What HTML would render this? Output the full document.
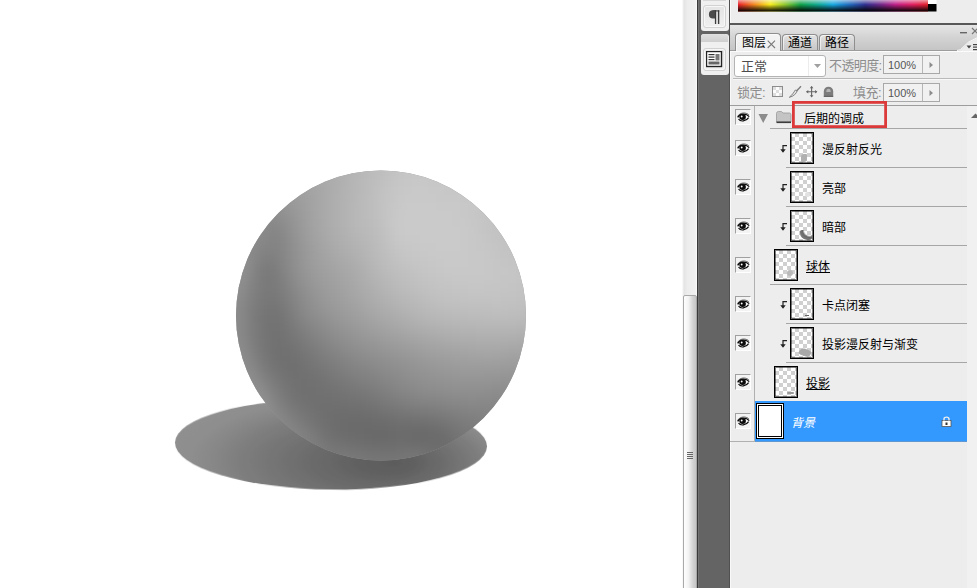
<!DOCTYPE html>
<html lang="zh-CN">
<head>
<meta charset="utf-8">
<title>图层</title>
<style>
html,body{margin:0;padding:0;}
body{width:977px;height:588px;overflow:hidden;background:#fff;position:relative;
  font-family:"Liberation Sans","Noto Sans CJK SC",sans-serif;font-size:12px;color:#000;}
.abs{position:absolute;}
#canvas{left:0;top:0;width:683px;height:588px;background:#fff;}
#vscroll{left:682px;top:0;width:15px;height:588px;background:linear-gradient(90deg,#fff 0,#e4e4e4 2px,#ececec 5px,#f0f0f0 13px,#fafafa 15px);}
#vthumb{left:1px;top:295px;width:12px;height:300px;border:1px solid #a9a9a9;border-radius:2px;
  background:linear-gradient(90deg,#fdfdfd 0%,#f4f4f4 35%,#d2d2d2 75%,#c6c6c6 100%);}
#dock{left:697px;top:0;width:33px;height:588px;background:#646464;box-shadow:inset 1px 0 0 #3a3a3a, inset 2px 0 0 #747474, inset -1px 0 0 #505050;}
.ipanel{left:4px;width:28px;background:#f0f0f0;border-radius:3px;}
.ibtn{left:2px;width:23px;height:23px;border:1px solid #d2d2d2;border-radius:3px;background:linear-gradient(#e4e4e4,#f0f0f0);box-sizing:border-box;box-shadow:inset 0 0 0 1px #f7f7f7;}
#panel{left:730px;top:0;width:247px;height:588px;background:#ededed;box-shadow:inset 1px 0 0 #f9f9f9;}
#tabbar{left:0;top:25px;width:247px;height:25px;background:linear-gradient(#e6e6e6,#d3d3d3 50%,#c5c5c5);border-bottom:1px solid #9c9c9c;}
.tab{top:9px;height:16px;box-sizing:border-box;border:1px solid #8e8e8e;border-bottom:none;border-radius:4px 4px 0 0;
  background:linear-gradient(#e2e2e2,#c6c6c6);line-height:17px;text-align:center;white-space:nowrap;box-shadow:inset 1px 1px 0 rgba(255,255,255,0.6);}
.tab.act{top:8px;background:linear-gradient(#f4f4f4,#ededed);height:18px;line-height:18px;z-index:2;}
.gray{color:#8c8c8c;}
.box{box-sizing:border-box;border:1px solid #a8a8a8;background:#f1f1f1;}
.hline{height:1px;background:#a6a6a6;}
.eye{left:5px;width:16px;height:16px;box-sizing:border-box;border:1px solid #a0a0a0;border-right-color:#fff;border-bottom-color:#fff;background:#f3f3f3;}
.thumb{width:24px;height:32px;box-shadow:inset 0 0 0 1px rgba(0,0,0,0.5);box-sizing:border-box;border:1px solid #000;
  background-color:#fff;
  background-image:linear-gradient(45deg,#d0d0d0 25%,transparent 25%,transparent 75%,#d0d0d0 75%),linear-gradient(45deg,#d0d0d0 25%,transparent 25%,transparent 75%,#d0d0d0 75%);
  background-size:8px 8px;background-position:0 0,4px 4px;}
.lname{white-space:nowrap;line-height:14px;height:14px;margin-top:2px;}
.u{text-decoration:underline;text-underline-offset:1px;text-decoration-thickness:1px;}
</style>
</head>
<body>
<div id="canvas" class="abs">
<svg class="abs" style="left:0;top:0" width="683" height="588" viewBox="0 0 683 588">
  <defs>
    <radialGradient id="shg" gradientUnits="userSpaceOnUse" cx="330" cy="462" r="220" fx="395" fy="462" gradientTransform="translate(0 462) scale(1 0.4) translate(0 -462)">
      <stop offset="0" stop-color="#5c5c5c"/>
      <stop offset="0.12" stop-color="#606060"/>
      <stop offset="0.23" stop-color="#676767"/>
      <stop offset="0.34" stop-color="#6e6e6e"/>
      <stop offset="0.45" stop-color="#767676"/>
      <stop offset="0.55" stop-color="#7e7e7e"/>
      <stop offset="0.63" stop-color="#868686"/>
      <stop offset="0.72" stop-color="#8e8e8e"/>
      <stop offset="1" stop-color="#919191"/>
    </radialGradient>
    <clipPath id="cc"><circle cx="381" cy="315.5" r="145"/></clipPath>
    <filter id="sb" x="-10%" y="-10%" width="120%" height="120%" color-interpolation-filters="sRGB"><feGaussianBlur stdDeviation="4"/></filter>
    <filter id="rb" x="-10%" y="-10%" width="120%" height="120%"><feGaussianBlur stdDeviation="3.5"/></filter>
    <filter id="b1" x="-20%" y="-20%" width="140%" height="140%"><feGaussianBlur stdDeviation="0.7"/></filter>
  </defs>
  <ellipse cx="331" cy="444.5" rx="156" ry="45" fill="url(#shg)" transform="rotate(0.7 331 444.5)" filter="url(#b1)"/>
  <circle cx="381" cy="315.5" r="145" fill="#999"/>
  <!--SPHERE--><g clip-path="url(#cc)"><g filter="url(#sb)"><path fill="#6a6a6a" d="M364 426.5h8.4v8.4h-8.4zM372 426.5h8.4v8.4h-8.4zM380 426.5h8.4v8.4h-8.4zM372 434.5h8.4v8.4h-8.4zM380 434.5h8.4v8.4h-8.4zM412 434.5h8.4v8.4h-8.4zM420 434.5h8.4v8.4h-8.4z"/><path fill="#6b6b6b" d="M348 418.5h8.4v8.4h-8.4zM356 418.5h8.4v8.4h-8.4zM364 418.5h8.4v8.4h-8.4zM348 426.5h8.4v8.4h-8.4zM356 426.5h8.4v8.4h-8.4zM388 426.5h8.4v8.4h-8.4zM412 426.5h8.4v8.4h-8.4zM420 426.5h8.4v8.4h-8.4zM364 434.5h8.4v8.4h-8.4zM388 434.5h8.4v8.4h-8.4zM404 434.5h8.4v8.4h-8.4zM428 434.5h8.4v8.4h-8.4zM436 434.5h8.4v8.4h-8.4z"/><path fill="#6c6c6c" d="M340 418.5h8.4v8.4h-8.4zM372 418.5h8.4v8.4h-8.4zM380 418.5h8.4v8.4h-8.4zM340 426.5h8.4v8.4h-8.4zM396 426.5h8.4v8.4h-8.4zM404 426.5h8.4v8.4h-8.4zM428 426.5h8.4v8.4h-8.4zM356 434.5h8.4v8.4h-8.4zM396 434.5h8.4v8.4h-8.4z"/><path fill="#6d6d6d" d="M332 410.5h8.4v8.4h-8.4zM340 410.5h8.4v8.4h-8.4zM348 410.5h8.4v8.4h-8.4zM356 410.5h8.4v8.4h-8.4zM332 418.5h8.4v8.4h-8.4zM332 426.5h8.4v8.4h-8.4zM348 434.5h8.4v8.4h-8.4zM428 442.5h8.4v8.4h-8.4zM436 442.5h8.4v8.4h-8.4zM444 442.5h8.4v8.4h-8.4zM444 450.5h8.4v8.4h-8.4zM444 458.5h8.4v8.4h-8.4z"/><path fill="#6e6e6e" d="M324 410.5h8.4v8.4h-8.4zM364 410.5h8.4v8.4h-8.4zM388 418.5h8.4v8.4h-8.4zM436 426.5h8.4v8.4h-8.4zM340 434.5h8.4v8.4h-8.4zM444 434.5h8.4v8.4h-8.4zM372 442.5h8.4v8.4h-8.4zM380 442.5h8.4v8.4h-8.4zM388 442.5h8.4v8.4h-8.4zM420 442.5h8.4v8.4h-8.4zM436 450.5h8.4v8.4h-8.4zM436 458.5h8.4v8.4h-8.4z"/><path fill="#6f6f6f" d="M316 402.5h8.4v8.4h-8.4zM324 402.5h8.4v8.4h-8.4zM332 402.5h8.4v8.4h-8.4zM340 402.5h8.4v8.4h-8.4zM372 410.5h8.4v8.4h-8.4zM324 418.5h8.4v8.4h-8.4zM396 418.5h8.4v8.4h-8.4zM404 418.5h8.4v8.4h-8.4zM364 442.5h8.4v8.4h-8.4zM396 442.5h8.4v8.4h-8.4zM404 442.5h8.4v8.4h-8.4zM412 442.5h8.4v8.4h-8.4zM452 450.5h8.4v8.4h-8.4z"/><path fill="#707070" d="M276 346.5h8.4v8.4h-8.4zM276 354.5h8.4v8.4h-8.4zM284 354.5h8.4v8.4h-8.4zM284 362.5h8.4v8.4h-8.4zM292 362.5h8.4v8.4h-8.4zM292 370.5h8.4v8.4h-8.4zM300 378.5h8.4v8.4h-8.4zM300 386.5h8.4v8.4h-8.4zM308 386.5h8.4v8.4h-8.4zM308 394.5h8.4v8.4h-8.4zM316 394.5h8.4v8.4h-8.4zM324 394.5h8.4v8.4h-8.4zM348 402.5h8.4v8.4h-8.4zM356 402.5h8.4v8.4h-8.4zM316 410.5h8.4v8.4h-8.4zM412 418.5h8.4v8.4h-8.4zM420 418.5h8.4v8.4h-8.4zM324 426.5h8.4v8.4h-8.4zM332 434.5h8.4v8.4h-8.4zM356 442.5h8.4v8.4h-8.4zM452 442.5h8.4v8.4h-8.4zM428 450.5h8.4v8.4h-8.4z"/><path fill="#717171" d="M276 338.5h8.4v8.4h-8.4zM284 346.5h8.4v8.4h-8.4zM292 354.5h8.4v8.4h-8.4zM284 370.5h8.4v8.4h-8.4zM300 370.5h8.4v8.4h-8.4zM292 378.5h8.4v8.4h-8.4zM308 378.5h8.4v8.4h-8.4zM292 386.5h8.4v8.4h-8.4zM316 386.5h8.4v8.4h-8.4zM300 394.5h8.4v8.4h-8.4zM332 394.5h8.4v8.4h-8.4zM308 402.5h8.4v8.4h-8.4zM380 410.5h8.4v8.4h-8.4zM316 418.5h8.4v8.4h-8.4zM444 426.5h8.4v8.4h-8.4zM348 442.5h8.4v8.4h-8.4zM428 458.5h8.4v8.4h-8.4z"/><path fill="#727272" d="M268 322.5h8.4v8.4h-8.4zM268 330.5h8.4v8.4h-8.4zM276 330.5h8.4v8.4h-8.4zM268 338.5h8.4v8.4h-8.4zM268 346.5h8.4v8.4h-8.4zM276 362.5h8.4v8.4h-8.4zM300 362.5h8.4v8.4h-8.4zM308 370.5h8.4v8.4h-8.4zM316 378.5h8.4v8.4h-8.4zM324 386.5h8.4v8.4h-8.4zM340 394.5h8.4v8.4h-8.4zM364 402.5h8.4v8.4h-8.4zM388 410.5h8.4v8.4h-8.4zM428 418.5h8.4v8.4h-8.4zM324 434.5h8.4v8.4h-8.4zM460 450.5h8.4v8.4h-8.4zM428 466.5h8.4v8.4h-8.4z"/><path fill="#737373" d="M268 314.5h8.4v8.4h-8.4zM276 322.5h8.4v8.4h-8.4zM284 338.5h8.4v8.4h-8.4zM292 346.5h8.4v8.4h-8.4zM268 354.5h8.4v8.4h-8.4zM284 378.5h8.4v8.4h-8.4zM332 386.5h8.4v8.4h-8.4zM292 394.5h8.4v8.4h-8.4zM348 394.5h8.4v8.4h-8.4zM300 402.5h8.4v8.4h-8.4zM372 402.5h8.4v8.4h-8.4zM308 410.5h8.4v8.4h-8.4zM436 418.5h8.4v8.4h-8.4zM452 434.5h8.4v8.4h-8.4zM340 442.5h8.4v8.4h-8.4zM380 450.5h8.4v8.4h-8.4zM388 450.5h8.4v8.4h-8.4zM420 450.5h8.4v8.4h-8.4z"/><path fill="#747474" d="M268 306.5h8.4v8.4h-8.4zM276 314.5h8.4v8.4h-8.4zM300 354.5h8.4v8.4h-8.4zM276 370.5h8.4v8.4h-8.4zM316 370.5h8.4v8.4h-8.4zM324 378.5h8.4v8.4h-8.4zM356 394.5h8.4v8.4h-8.4zM396 410.5h8.4v8.4h-8.4zM316 426.5h8.4v8.4h-8.4zM332 442.5h8.4v8.4h-8.4zM460 442.5h8.4v8.4h-8.4zM364 450.5h8.4v8.4h-8.4zM372 450.5h8.4v8.4h-8.4zM396 450.5h8.4v8.4h-8.4zM420 458.5h8.4v8.4h-8.4z"/><path fill="#757575" d="M260 314.5h8.4v8.4h-8.4zM260 322.5h8.4v8.4h-8.4zM260 330.5h8.4v8.4h-8.4zM284 330.5h8.4v8.4h-8.4zM268 362.5h8.4v8.4h-8.4zM308 362.5h8.4v8.4h-8.4zM284 386.5h8.4v8.4h-8.4zM340 386.5h8.4v8.4h-8.4zM404 410.5h8.4v8.4h-8.4zM308 418.5h8.4v8.4h-8.4zM452 426.5h8.4v8.4h-8.4zM404 450.5h8.4v8.4h-8.4zM412 450.5h8.4v8.4h-8.4zM420 466.5h8.4v8.4h-8.4z"/><path fill="#767676" d="M268 298.5h8.4v8.4h-8.4zM260 306.5h8.4v8.4h-8.4zM276 306.5h8.4v8.4h-8.4zM260 338.5h8.4v8.4h-8.4zM292 338.5h8.4v8.4h-8.4zM260 346.5h8.4v8.4h-8.4zM332 378.5h8.4v8.4h-8.4zM364 394.5h8.4v8.4h-8.4zM292 402.5h8.4v8.4h-8.4zM380 402.5h8.4v8.4h-8.4zM300 410.5h8.4v8.4h-8.4zM412 410.5h8.4v8.4h-8.4zM444 418.5h8.4v8.4h-8.4zM460 434.5h8.4v8.4h-8.4zM468 442.5h8.4v8.4h-8.4zM356 450.5h8.4v8.4h-8.4zM396 458.5h8.4v8.4h-8.4zM404 458.5h8.4v8.4h-8.4zM412 458.5h8.4v8.4h-8.4zM404 466.5h8.4v8.4h-8.4zM412 466.5h8.4v8.4h-8.4z"/><path fill="#777777" d="M284 322.5h8.4v8.4h-8.4zM300 346.5h8.4v8.4h-8.4zM308 354.5h8.4v8.4h-8.4zM316 362.5h8.4v8.4h-8.4zM324 370.5h8.4v8.4h-8.4zM276 378.5h8.4v8.4h-8.4zM348 386.5h8.4v8.4h-8.4zM284 394.5h8.4v8.4h-8.4zM420 410.5h8.4v8.4h-8.4zM316 434.5h8.4v8.4h-8.4zM324 442.5h8.4v8.4h-8.4zM348 450.5h8.4v8.4h-8.4zM372 458.5h8.4v8.4h-8.4zM380 458.5h8.4v8.4h-8.4zM388 458.5h8.4v8.4h-8.4zM372 466.5h8.4v8.4h-8.4zM380 466.5h8.4v8.4h-8.4zM388 466.5h8.4v8.4h-8.4zM396 466.5h8.4v8.4h-8.4zM372 474.5h8.4v8.4h-8.4zM380 474.5h8.4v8.4h-8.4zM388 474.5h8.4v8.4h-8.4zM396 474.5h8.4v8.4h-8.4z"/><path fill="#787878" d="M268 290.5h8.4v8.4h-8.4zM260 298.5h8.4v8.4h-8.4zM260 354.5h8.4v8.4h-8.4zM340 378.5h8.4v8.4h-8.4zM356 386.5h8.4v8.4h-8.4zM372 394.5h8.4v8.4h-8.4zM388 402.5h8.4v8.4h-8.4zM428 410.5h8.4v8.4h-8.4zM460 426.5h8.4v8.4h-8.4zM468 434.5h8.4v8.4h-8.4zM332 450.5h8.4v8.4h-8.4zM340 450.5h8.4v8.4h-8.4zM324 458.5h8.4v8.4h-8.4zM332 458.5h8.4v8.4h-8.4zM356 458.5h8.4v8.4h-8.4zM364 458.5h8.4v8.4h-8.4zM324 466.5h8.4v8.4h-8.4zM332 466.5h8.4v8.4h-8.4zM348 466.5h8.4v8.4h-8.4zM356 466.5h8.4v8.4h-8.4zM364 466.5h8.4v8.4h-8.4zM356 474.5h8.4v8.4h-8.4zM364 474.5h8.4v8.4h-8.4z"/><path fill="#797979" d="M260 290.5h8.4v8.4h-8.4zM276 298.5h8.4v8.4h-8.4zM252 314.5h8.4v8.4h-8.4zM284 314.5h8.4v8.4h-8.4zM292 330.5h8.4v8.4h-8.4zM268 370.5h8.4v8.4h-8.4zM300 418.5h8.4v8.4h-8.4zM452 418.5h8.4v8.4h-8.4zM308 426.5h8.4v8.4h-8.4zM476 442.5h8.4v8.4h-8.4zM324 450.5h8.4v8.4h-8.4zM316 458.5h8.4v8.4h-8.4zM340 458.5h8.4v8.4h-8.4zM348 458.5h8.4v8.4h-8.4zM340 466.5h8.4v8.4h-8.4z"/><path fill="#7a7a7a" d="M260 274.5h8.4v8.4h-8.4zM268 274.5h8.4v8.4h-8.4zM260 282.5h8.4v8.4h-8.4zM268 282.5h8.4v8.4h-8.4zM252 306.5h8.4v8.4h-8.4zM252 322.5h8.4v8.4h-8.4zM252 330.5h8.4v8.4h-8.4zM300 338.5h8.4v8.4h-8.4zM308 346.5h8.4v8.4h-8.4zM324 362.5h8.4v8.4h-8.4zM332 370.5h8.4v8.4h-8.4zM348 378.5h8.4v8.4h-8.4zM276 386.5h8.4v8.4h-8.4zM364 386.5h8.4v8.4h-8.4zM396 402.5h8.4v8.4h-8.4zM292 410.5h8.4v8.4h-8.4zM436 410.5h8.4v8.4h-8.4zM468 426.5h8.4v8.4h-8.4zM316 450.5h8.4v8.4h-8.4z"/><path fill="#7b7b7b" d="M260 266.5h8.4v8.4h-8.4zM268 266.5h8.4v8.4h-8.4zM276 290.5h8.4v8.4h-8.4zM284 306.5h8.4v8.4h-8.4zM252 338.5h8.4v8.4h-8.4zM316 354.5h8.4v8.4h-8.4zM260 362.5h8.4v8.4h-8.4zM380 394.5h8.4v8.4h-8.4zM284 402.5h8.4v8.4h-8.4zM460 418.5h8.4v8.4h-8.4zM476 434.5h8.4v8.4h-8.4zM316 442.5h8.4v8.4h-8.4zM308 458.5h8.4v8.4h-8.4z"/><path fill="#7c7c7c" d="M252 298.5h8.4v8.4h-8.4zM292 322.5h8.4v8.4h-8.4zM340 370.5h8.4v8.4h-8.4zM404 402.5h8.4v8.4h-8.4zM444 410.5h8.4v8.4h-8.4zM308 450.5h8.4v8.4h-8.4z"/><path fill="#7d7d7d" d="M268 258.5h8.4v8.4h-8.4zM276 282.5h8.4v8.4h-8.4zM252 290.5h8.4v8.4h-8.4zM300 330.5h8.4v8.4h-8.4zM252 346.5h8.4v8.4h-8.4zM332 362.5h8.4v8.4h-8.4zM268 378.5h8.4v8.4h-8.4zM356 378.5h8.4v8.4h-8.4zM372 386.5h8.4v8.4h-8.4zM276 394.5h8.4v8.4h-8.4zM388 394.5h8.4v8.4h-8.4zM468 418.5h8.4v8.4h-8.4zM476 426.5h8.4v8.4h-8.4zM308 434.5h8.4v8.4h-8.4zM484 434.5h8.4v8.4h-8.4z"/><path fill="#7e7e7e" d="M260 258.5h8.4v8.4h-8.4zM276 274.5h8.4v8.4h-8.4zM284 298.5h8.4v8.4h-8.4zM308 338.5h8.4v8.4h-8.4zM316 346.5h8.4v8.4h-8.4zM324 354.5h8.4v8.4h-8.4zM412 402.5h8.4v8.4h-8.4zM452 410.5h8.4v8.4h-8.4zM292 418.5h8.4v8.4h-8.4zM300 426.5h8.4v8.4h-8.4zM308 442.5h8.4v8.4h-8.4z"/><path fill="#7f7f7f" d="M252 282.5h8.4v8.4h-8.4zM292 314.5h8.4v8.4h-8.4zM252 354.5h8.4v8.4h-8.4zM260 370.5h8.4v8.4h-8.4zM348 370.5h8.4v8.4h-8.4zM364 378.5h8.4v8.4h-8.4zM380 386.5h8.4v8.4h-8.4zM420 402.5h8.4v8.4h-8.4zM284 410.5h8.4v8.4h-8.4zM476 418.5h8.4v8.4h-8.4zM484 426.5h8.4v8.4h-8.4zM300 450.5h8.4v8.4h-8.4z"/><path fill="#808080" d="M268 250.5h8.4v8.4h-8.4zM276 266.5h8.4v8.4h-8.4zM252 274.5h8.4v8.4h-8.4zM284 290.5h8.4v8.4h-8.4zM340 362.5h8.4v8.4h-8.4zM396 394.5h8.4v8.4h-8.4zM428 402.5h8.4v8.4h-8.4zM460 410.5h8.4v8.4h-8.4zM300 442.5h8.4v8.4h-8.4z"/><path fill="#818181" d="M260 250.5h8.4v8.4h-8.4zM252 266.5h8.4v8.4h-8.4zM244 306.5h8.4v8.4h-8.4zM244 314.5h8.4v8.4h-8.4zM244 322.5h8.4v8.4h-8.4zM300 322.5h8.4v8.4h-8.4zM244 330.5h8.4v8.4h-8.4zM332 354.5h8.4v8.4h-8.4zM356 370.5h8.4v8.4h-8.4zM372 378.5h8.4v8.4h-8.4zM268 386.5h8.4v8.4h-8.4zM276 402.5h8.4v8.4h-8.4zM436 402.5h8.4v8.4h-8.4zM468 410.5h8.4v8.4h-8.4zM484 418.5h8.4v8.4h-8.4zM492 426.5h8.4v8.4h-8.4zM300 434.5h8.4v8.4h-8.4zM292 450.5h8.4v8.4h-8.4z"/><path fill="#828282" d="M276 258.5h8.4v8.4h-8.4zM244 298.5h8.4v8.4h-8.4zM292 306.5h8.4v8.4h-8.4zM308 330.5h8.4v8.4h-8.4zM316 338.5h8.4v8.4h-8.4zM324 346.5h8.4v8.4h-8.4zM388 386.5h8.4v8.4h-8.4zM404 394.5h8.4v8.4h-8.4zM476 410.5h8.4v8.4h-8.4zM492 418.5h8.4v8.4h-8.4zM292 442.5h8.4v8.4h-8.4z"/><path fill="#838383" d="M268 242.5h8.4v8.4h-8.4zM284 282.5h8.4v8.4h-8.4zM244 338.5h8.4v8.4h-8.4zM252 362.5h8.4v8.4h-8.4zM348 362.5h8.4v8.4h-8.4zM364 370.5h8.4v8.4h-8.4zM444 402.5h8.4v8.4h-8.4zM484 410.5h8.4v8.4h-8.4zM292 426.5h8.4v8.4h-8.4zM292 434.5h8.4v8.4h-8.4zM284 442.5h8.4v8.4h-8.4z"/><path fill="#848484" d="M268 234.5h8.4v8.4h-8.4zM260 242.5h8.4v8.4h-8.4zM276 250.5h8.4v8.4h-8.4zM252 258.5h8.4v8.4h-8.4zM244 290.5h8.4v8.4h-8.4zM340 354.5h8.4v8.4h-8.4zM260 378.5h8.4v8.4h-8.4zM380 378.5h8.4v8.4h-8.4zM412 394.5h8.4v8.4h-8.4zM452 402.5h8.4v8.4h-8.4zM492 410.5h8.4v8.4h-8.4zM284 418.5h8.4v8.4h-8.4zM500 418.5h8.4v8.4h-8.4zM284 434.5h8.4v8.4h-8.4z"/><path fill="#858585" d="M268 226.5h8.4v8.4h-8.4zM276 242.5h8.4v8.4h-8.4zM284 274.5h8.4v8.4h-8.4zM292 298.5h8.4v8.4h-8.4zM244 346.5h8.4v8.4h-8.4zM332 346.5h8.4v8.4h-8.4zM356 362.5h8.4v8.4h-8.4zM372 370.5h8.4v8.4h-8.4zM396 386.5h8.4v8.4h-8.4zM268 394.5h8.4v8.4h-8.4zM460 402.5h8.4v8.4h-8.4zM284 426.5h8.4v8.4h-8.4zM276 434.5h8.4v8.4h-8.4z"/><path fill="#868686" d="M276 234.5h8.4v8.4h-8.4zM252 250.5h8.4v8.4h-8.4zM244 282.5h8.4v8.4h-8.4zM300 314.5h8.4v8.4h-8.4zM308 322.5h8.4v8.4h-8.4zM316 330.5h8.4v8.4h-8.4zM324 338.5h8.4v8.4h-8.4zM388 378.5h8.4v8.4h-8.4zM420 394.5h8.4v8.4h-8.4zM428 394.5h8.4v8.4h-8.4zM468 402.5h8.4v8.4h-8.4zM476 402.5h8.4v8.4h-8.4zM484 402.5h8.4v8.4h-8.4zM492 402.5h8.4v8.4h-8.4zM276 410.5h8.4v8.4h-8.4zM500 410.5h8.4v8.4h-8.4zM276 426.5h8.4v8.4h-8.4zM268 434.5h8.4v8.4h-8.4z"/><path fill="#878787" d="M260 234.5h8.4v8.4h-8.4zM292 290.5h8.4v8.4h-8.4zM348 354.5h8.4v8.4h-8.4zM364 362.5h8.4v8.4h-8.4zM252 370.5h8.4v8.4h-8.4zM404 386.5h8.4v8.4h-8.4zM436 394.5h8.4v8.4h-8.4zM500 402.5h8.4v8.4h-8.4zM508 410.5h8.4v8.4h-8.4zM276 418.5h8.4v8.4h-8.4zM268 426.5h8.4v8.4h-8.4z"/><path fill="#888888" d="M276 226.5h8.4v8.4h-8.4zM284 266.5h8.4v8.4h-8.4zM244 354.5h8.4v8.4h-8.4zM380 370.5h8.4v8.4h-8.4zM268 418.5h8.4v8.4h-8.4zM260 426.5h8.4v8.4h-8.4z"/><path fill="#898989" d="M252 210.5h8.4v8.4h-8.4zM260 218.5h8.4v8.4h-8.4zM268 218.5h8.4v8.4h-8.4zM252 242.5h8.4v8.4h-8.4zM284 258.5h8.4v8.4h-8.4zM244 274.5h8.4v8.4h-8.4zM236 306.5h8.4v8.4h-8.4zM300 306.5h8.4v8.4h-8.4zM236 314.5h8.4v8.4h-8.4zM236 322.5h8.4v8.4h-8.4zM236 330.5h8.4v8.4h-8.4zM340 346.5h8.4v8.4h-8.4zM396 378.5h8.4v8.4h-8.4zM412 386.5h8.4v8.4h-8.4zM444 394.5h8.4v8.4h-8.4zM492 394.5h8.4v8.4h-8.4zM508 402.5h8.4v8.4h-8.4z"/><path fill="#8a8a8a" d="M260 210.5h8.4v8.4h-8.4zM244 218.5h8.4v8.4h-8.4zM252 218.5h8.4v8.4h-8.4zM236 226.5h8.4v8.4h-8.4zM244 226.5h8.4v8.4h-8.4zM252 226.5h8.4v8.4h-8.4zM260 226.5h8.4v8.4h-8.4zM236 234.5h8.4v8.4h-8.4zM244 234.5h8.4v8.4h-8.4zM252 234.5h8.4v8.4h-8.4zM244 242.5h8.4v8.4h-8.4zM284 250.5h8.4v8.4h-8.4zM292 282.5h8.4v8.4h-8.4zM236 298.5h8.4v8.4h-8.4zM308 314.5h8.4v8.4h-8.4zM316 322.5h8.4v8.4h-8.4zM324 330.5h8.4v8.4h-8.4zM332 338.5h8.4v8.4h-8.4zM356 354.5h8.4v8.4h-8.4zM372 362.5h8.4v8.4h-8.4zM388 370.5h8.4v8.4h-8.4zM260 386.5h8.4v8.4h-8.4zM452 394.5h8.4v8.4h-8.4zM460 394.5h8.4v8.4h-8.4zM476 394.5h8.4v8.4h-8.4zM484 394.5h8.4v8.4h-8.4zM500 394.5h8.4v8.4h-8.4zM268 402.5h8.4v8.4h-8.4zM268 410.5h8.4v8.4h-8.4zM260 418.5h8.4v8.4h-8.4z"/><path fill="#8b8b8b" d="M276 218.5h8.4v8.4h-8.4zM228 242.5h8.4v8.4h-8.4zM236 242.5h8.4v8.4h-8.4zM284 242.5h8.4v8.4h-8.4zM244 250.5h8.4v8.4h-8.4zM244 266.5h8.4v8.4h-8.4zM300 298.5h8.4v8.4h-8.4zM220 322.5h8.4v8.4h-8.4zM228 322.5h8.4v8.4h-8.4zM220 330.5h8.4v8.4h-8.4zM228 330.5h8.4v8.4h-8.4zM220 338.5h8.4v8.4h-8.4zM228 338.5h8.4v8.4h-8.4zM236 338.5h8.4v8.4h-8.4zM244 362.5h8.4v8.4h-8.4zM404 378.5h8.4v8.4h-8.4zM420 386.5h8.4v8.4h-8.4zM468 394.5h8.4v8.4h-8.4zM252 418.5h8.4v8.4h-8.4z"/><path fill="#8c8c8c" d="M260 202.5h8.4v8.4h-8.4zM268 210.5h8.4v8.4h-8.4zM284 234.5h8.4v8.4h-8.4zM236 250.5h8.4v8.4h-8.4zM244 258.5h8.4v8.4h-8.4zM236 290.5h8.4v8.4h-8.4zM220 306.5h8.4v8.4h-8.4zM228 306.5h8.4v8.4h-8.4zM220 314.5h8.4v8.4h-8.4zM228 314.5h8.4v8.4h-8.4zM220 346.5h8.4v8.4h-8.4zM228 346.5h8.4v8.4h-8.4zM236 346.5h8.4v8.4h-8.4zM348 346.5h8.4v8.4h-8.4zM220 354.5h8.4v8.4h-8.4zM364 354.5h8.4v8.4h-8.4zM380 362.5h8.4v8.4h-8.4zM396 370.5h8.4v8.4h-8.4zM252 378.5h8.4v8.4h-8.4zM428 386.5h8.4v8.4h-8.4zM508 394.5h8.4v8.4h-8.4zM260 410.5h8.4v8.4h-8.4z"/><path fill="#8d8d8d" d="M228 250.5h8.4v8.4h-8.4zM292 274.5h8.4v8.4h-8.4zM220 290.5h8.4v8.4h-8.4zM228 290.5h8.4v8.4h-8.4zM300 290.5h8.4v8.4h-8.4zM220 298.5h8.4v8.4h-8.4zM228 298.5h8.4v8.4h-8.4zM340 338.5h8.4v8.4h-8.4zM228 354.5h8.4v8.4h-8.4zM236 354.5h8.4v8.4h-8.4zM228 362.5h8.4v8.4h-8.4zM236 362.5h8.4v8.4h-8.4zM228 370.5h8.4v8.4h-8.4zM236 370.5h8.4v8.4h-8.4zM412 378.5h8.4v8.4h-8.4zM436 386.5h8.4v8.4h-8.4zM492 386.5h8.4v8.4h-8.4zM500 386.5h8.4v8.4h-8.4zM516 394.5h8.4v8.4h-8.4zM252 410.5h8.4v8.4h-8.4z"/><path fill="#8e8e8e" d="M284 226.5h8.4v8.4h-8.4zM236 258.5h8.4v8.4h-8.4zM220 282.5h8.4v8.4h-8.4zM228 282.5h8.4v8.4h-8.4zM236 282.5h8.4v8.4h-8.4zM308 306.5h8.4v8.4h-8.4zM316 314.5h8.4v8.4h-8.4zM324 322.5h8.4v8.4h-8.4zM332 330.5h8.4v8.4h-8.4zM356 346.5h8.4v8.4h-8.4zM372 354.5h8.4v8.4h-8.4zM388 362.5h8.4v8.4h-8.4zM244 370.5h8.4v8.4h-8.4zM228 378.5h8.4v8.4h-8.4zM236 378.5h8.4v8.4h-8.4zM244 378.5h8.4v8.4h-8.4zM444 386.5h8.4v8.4h-8.4zM484 386.5h8.4v8.4h-8.4zM260 402.5h8.4v8.4h-8.4z"/><path fill="#8f8f8f" d="M268 202.5h8.4v8.4h-8.4zM276 210.5h8.4v8.4h-8.4zM228 258.5h8.4v8.4h-8.4zM220 266.5h8.4v8.4h-8.4zM228 266.5h8.4v8.4h-8.4zM236 266.5h8.4v8.4h-8.4zM292 266.5h8.4v8.4h-8.4zM220 274.5h8.4v8.4h-8.4zM228 274.5h8.4v8.4h-8.4zM236 274.5h8.4v8.4h-8.4zM404 370.5h8.4v8.4h-8.4zM420 378.5h8.4v8.4h-8.4zM236 386.5h8.4v8.4h-8.4zM244 386.5h8.4v8.4h-8.4zM252 386.5h8.4v8.4h-8.4zM452 386.5h8.4v8.4h-8.4zM460 386.5h8.4v8.4h-8.4zM468 386.5h8.4v8.4h-8.4zM476 386.5h8.4v8.4h-8.4zM508 386.5h8.4v8.4h-8.4zM236 394.5h8.4v8.4h-8.4zM260 394.5h8.4v8.4h-8.4zM252 402.5h8.4v8.4h-8.4z"/><path fill="#909090" d="M284 218.5h8.4v8.4h-8.4zM292 258.5h8.4v8.4h-8.4zM300 282.5h8.4v8.4h-8.4zM308 298.5h8.4v8.4h-8.4zM348 338.5h8.4v8.4h-8.4zM380 354.5h8.4v8.4h-8.4zM396 362.5h8.4v8.4h-8.4zM428 378.5h8.4v8.4h-8.4zM516 386.5h8.4v8.4h-8.4zM244 394.5h8.4v8.4h-8.4zM252 394.5h8.4v8.4h-8.4zM244 402.5h8.4v8.4h-8.4z"/><path fill="#919191" d="M292 250.5h8.4v8.4h-8.4zM340 330.5h8.4v8.4h-8.4zM364 346.5h8.4v8.4h-8.4zM412 370.5h8.4v8.4h-8.4zM436 378.5h8.4v8.4h-8.4zM500 378.5h8.4v8.4h-8.4z"/><path fill="#929292" d="M268 194.5h8.4v8.4h-8.4zM276 202.5h8.4v8.4h-8.4zM292 242.5h8.4v8.4h-8.4zM316 306.5h8.4v8.4h-8.4zM324 314.5h8.4v8.4h-8.4zM332 322.5h8.4v8.4h-8.4zM388 354.5h8.4v8.4h-8.4zM404 362.5h8.4v8.4h-8.4zM420 370.5h8.4v8.4h-8.4zM444 378.5h8.4v8.4h-8.4zM492 378.5h8.4v8.4h-8.4zM508 378.5h8.4v8.4h-8.4z"/><path fill="#939393" d="M284 210.5h8.4v8.4h-8.4zM292 234.5h8.4v8.4h-8.4zM300 274.5h8.4v8.4h-8.4zM308 290.5h8.4v8.4h-8.4zM356 338.5h8.4v8.4h-8.4zM372 346.5h8.4v8.4h-8.4zM452 378.5h8.4v8.4h-8.4zM460 378.5h8.4v8.4h-8.4zM468 378.5h8.4v8.4h-8.4zM476 378.5h8.4v8.4h-8.4zM484 378.5h8.4v8.4h-8.4zM516 378.5h8.4v8.4h-8.4z"/><path fill="#949494" d="M348 330.5h8.4v8.4h-8.4zM396 354.5h8.4v8.4h-8.4zM412 362.5h8.4v8.4h-8.4zM428 370.5h8.4v8.4h-8.4z"/><path fill="#959595" d="M276 194.5h8.4v8.4h-8.4zM292 226.5h8.4v8.4h-8.4zM300 266.5h8.4v8.4h-8.4zM308 282.5h8.4v8.4h-8.4zM316 298.5h8.4v8.4h-8.4zM340 322.5h8.4v8.4h-8.4zM364 338.5h8.4v8.4h-8.4zM380 346.5h8.4v8.4h-8.4zM436 370.5h8.4v8.4h-8.4zM508 370.5h8.4v8.4h-8.4zM524 378.5h8.4v8.4h-8.4z"/><path fill="#969696" d="M284 202.5h8.4v8.4h-8.4zM292 218.5h8.4v8.4h-8.4zM324 306.5h8.4v8.4h-8.4zM332 314.5h8.4v8.4h-8.4zM404 354.5h8.4v8.4h-8.4zM420 362.5h8.4v8.4h-8.4zM444 370.5h8.4v8.4h-8.4zM500 370.5h8.4v8.4h-8.4z"/><path fill="#979797" d="M300 250.5h8.4v8.4h-8.4zM300 258.5h8.4v8.4h-8.4zM316 290.5h8.4v8.4h-8.4zM356 330.5h8.4v8.4h-8.4zM372 338.5h8.4v8.4h-8.4zM388 346.5h8.4v8.4h-8.4zM428 362.5h8.4v8.4h-8.4zM452 370.5h8.4v8.4h-8.4zM484 370.5h8.4v8.4h-8.4zM492 370.5h8.4v8.4h-8.4zM516 370.5h8.4v8.4h-8.4z"/><path fill="#989898" d="M276 186.5h8.4v8.4h-8.4zM284 194.5h8.4v8.4h-8.4zM292 210.5h8.4v8.4h-8.4zM300 242.5h8.4v8.4h-8.4zM308 274.5h8.4v8.4h-8.4zM348 322.5h8.4v8.4h-8.4zM412 354.5h8.4v8.4h-8.4zM460 370.5h8.4v8.4h-8.4zM468 370.5h8.4v8.4h-8.4zM476 370.5h8.4v8.4h-8.4zM524 370.5h8.4v8.4h-8.4z"/><path fill="#999999" d="M324 298.5h8.4v8.4h-8.4zM332 306.5h8.4v8.4h-8.4zM340 314.5h8.4v8.4h-8.4zM396 346.5h8.4v8.4h-8.4zM436 362.5h8.4v8.4h-8.4z"/><path fill="#9a9a9a" d="M292 202.5h8.4v8.4h-8.4zM300 234.5h8.4v8.4h-8.4zM308 266.5h8.4v8.4h-8.4zM316 282.5h8.4v8.4h-8.4zM364 330.5h8.4v8.4h-8.4zM380 338.5h8.4v8.4h-8.4zM420 354.5h8.4v8.4h-8.4zM444 362.5h8.4v8.4h-8.4zM508 362.5h8.4v8.4h-8.4z"/><path fill="#9b9b9b" d="M284 186.5h8.4v8.4h-8.4zM300 226.5h8.4v8.4h-8.4zM324 290.5h8.4v8.4h-8.4zM356 322.5h8.4v8.4h-8.4zM404 346.5h8.4v8.4h-8.4zM452 362.5h8.4v8.4h-8.4zM500 362.5h8.4v8.4h-8.4zM516 362.5h8.4v8.4h-8.4z"/><path fill="#9c9c9c" d="M292 194.5h8.4v8.4h-8.4zM300 218.5h8.4v8.4h-8.4zM308 258.5h8.4v8.4h-8.4zM316 274.5h8.4v8.4h-8.4zM332 298.5h8.4v8.4h-8.4zM340 306.5h8.4v8.4h-8.4zM348 314.5h8.4v8.4h-8.4zM372 330.5h8.4v8.4h-8.4zM388 338.5h8.4v8.4h-8.4zM428 354.5h8.4v8.4h-8.4zM460 362.5h8.4v8.4h-8.4zM468 362.5h8.4v8.4h-8.4zM476 362.5h8.4v8.4h-8.4zM484 362.5h8.4v8.4h-8.4zM492 362.5h8.4v8.4h-8.4zM524 362.5h8.4v8.4h-8.4z"/><path fill="#9d9d9d" d="M284 178.5h8.4v8.4h-8.4zM300 210.5h8.4v8.4h-8.4zM308 250.5h8.4v8.4h-8.4zM324 282.5h8.4v8.4h-8.4zM412 346.5h8.4v8.4h-8.4zM436 354.5h8.4v8.4h-8.4z"/><path fill="#9e9e9e" d="M292 186.5h8.4v8.4h-8.4zM300 202.5h8.4v8.4h-8.4zM308 242.5h8.4v8.4h-8.4zM316 266.5h8.4v8.4h-8.4zM332 290.5h8.4v8.4h-8.4zM364 322.5h8.4v8.4h-8.4zM396 338.5h8.4v8.4h-8.4zM444 354.5h8.4v8.4h-8.4zM532 362.5h8.4v8.4h-8.4z"/><path fill="#9f9f9f" d="M300 194.5h8.4v8.4h-8.4zM324 274.5h8.4v8.4h-8.4zM340 298.5h8.4v8.4h-8.4zM348 306.5h8.4v8.4h-8.4zM356 314.5h8.4v8.4h-8.4zM380 330.5h8.4v8.4h-8.4zM420 346.5h8.4v8.4h-8.4zM508 354.5h8.4v8.4h-8.4zM516 354.5h8.4v8.4h-8.4z"/><path fill="#a0a0a0" d="M292 178.5h8.4v8.4h-8.4zM308 234.5h8.4v8.4h-8.4zM316 258.5h8.4v8.4h-8.4zM332 282.5h8.4v8.4h-8.4zM404 338.5h8.4v8.4h-8.4zM452 354.5h8.4v8.4h-8.4zM460 354.5h8.4v8.4h-8.4z"/><path fill="#a1a1a1" d="M292 170.5h8.4v8.4h-8.4zM300 186.5h8.4v8.4h-8.4zM308 226.5h8.4v8.4h-8.4zM316 250.5h8.4v8.4h-8.4zM324 266.5h8.4v8.4h-8.4zM340 290.5h8.4v8.4h-8.4zM372 322.5h8.4v8.4h-8.4zM388 330.5h8.4v8.4h-8.4zM428 346.5h8.4v8.4h-8.4zM468 354.5h8.4v8.4h-8.4zM476 354.5h8.4v8.4h-8.4zM492 354.5h8.4v8.4h-8.4zM500 354.5h8.4v8.4h-8.4zM524 354.5h8.4v8.4h-8.4z"/><path fill="#a2a2a2" d="M308 210.5h8.4v8.4h-8.4zM308 218.5h8.4v8.4h-8.4zM332 274.5h8.4v8.4h-8.4zM348 298.5h8.4v8.4h-8.4zM356 306.5h8.4v8.4h-8.4zM364 314.5h8.4v8.4h-8.4zM412 338.5h8.4v8.4h-8.4zM436 346.5h8.4v8.4h-8.4zM484 354.5h8.4v8.4h-8.4zM532 354.5h8.4v8.4h-8.4z"/><path fill="#a3a3a3" d="M300 178.5h8.4v8.4h-8.4zM308 194.5h8.4v8.4h-8.4zM308 202.5h8.4v8.4h-8.4zM316 242.5h8.4v8.4h-8.4zM324 258.5h8.4v8.4h-8.4zM340 282.5h8.4v8.4h-8.4zM380 322.5h8.4v8.4h-8.4zM396 330.5h8.4v8.4h-8.4zM444 346.5h8.4v8.4h-8.4z"/><path fill="#a4a4a4" d="M300 170.5h8.4v8.4h-8.4zM308 186.5h8.4v8.4h-8.4zM316 234.5h8.4v8.4h-8.4zM332 266.5h8.4v8.4h-8.4zM420 338.5h8.4v8.4h-8.4zM452 346.5h8.4v8.4h-8.4z"/><path fill="#a5a5a5" d="M308 178.5h8.4v8.4h-8.4zM324 250.5h8.4v8.4h-8.4zM340 274.5h8.4v8.4h-8.4zM348 290.5h8.4v8.4h-8.4zM356 298.5h8.4v8.4h-8.4zM372 314.5h8.4v8.4h-8.4zM460 346.5h8.4v8.4h-8.4zM508 346.5h8.4v8.4h-8.4zM516 346.5h8.4v8.4h-8.4z"/><path fill="#a6a6a6" d="M316 218.5h8.4v8.4h-8.4zM316 226.5h8.4v8.4h-8.4zM348 282.5h8.4v8.4h-8.4zM364 306.5h8.4v8.4h-8.4zM388 322.5h8.4v8.4h-8.4zM404 330.5h8.4v8.4h-8.4zM428 338.5h8.4v8.4h-8.4zM468 346.5h8.4v8.4h-8.4zM500 346.5h8.4v8.4h-8.4zM524 346.5h8.4v8.4h-8.4z"/><path fill="#a7a7a7" d="M308 170.5h8.4v8.4h-8.4zM316 186.5h8.4v8.4h-8.4zM316 194.5h8.4v8.4h-8.4zM316 202.5h8.4v8.4h-8.4zM316 210.5h8.4v8.4h-8.4zM324 242.5h8.4v8.4h-8.4zM332 258.5h8.4v8.4h-8.4zM340 266.5h8.4v8.4h-8.4zM436 338.5h8.4v8.4h-8.4zM476 346.5h8.4v8.4h-8.4zM484 346.5h8.4v8.4h-8.4zM492 346.5h8.4v8.4h-8.4zM532 346.5h8.4v8.4h-8.4z"/><path fill="#a8a8a8" d="M308 162.5h8.4v8.4h-8.4zM316 178.5h8.4v8.4h-8.4zM348 274.5h8.4v8.4h-8.4zM356 290.5h8.4v8.4h-8.4zM380 314.5h8.4v8.4h-8.4zM396 322.5h8.4v8.4h-8.4zM412 330.5h8.4v8.4h-8.4z"/><path fill="#a9a9a9" d="M316 170.5h8.4v8.4h-8.4zM324 234.5h8.4v8.4h-8.4zM332 250.5h8.4v8.4h-8.4zM340 258.5h8.4v8.4h-8.4zM364 298.5h8.4v8.4h-8.4zM372 306.5h8.4v8.4h-8.4zM444 338.5h8.4v8.4h-8.4z"/><path fill="#aaaaaa" d="M324 226.5h8.4v8.4h-8.4zM348 266.5h8.4v8.4h-8.4zM356 282.5h8.4v8.4h-8.4zM388 314.5h8.4v8.4h-8.4zM420 330.5h8.4v8.4h-8.4zM452 338.5h8.4v8.4h-8.4zM516 338.5h8.4v8.4h-8.4z"/><path fill="#ababab" d="M316 162.5h8.4v8.4h-8.4zM324 178.5h8.4v8.4h-8.4zM324 186.5h8.4v8.4h-8.4zM324 194.5h8.4v8.4h-8.4zM324 202.5h8.4v8.4h-8.4zM324 210.5h8.4v8.4h-8.4zM324 218.5h8.4v8.4h-8.4zM332 242.5h8.4v8.4h-8.4zM364 290.5h8.4v8.4h-8.4zM404 322.5h8.4v8.4h-8.4zM428 330.5h8.4v8.4h-8.4zM460 338.5h8.4v8.4h-8.4zM468 338.5h8.4v8.4h-8.4zM508 338.5h8.4v8.4h-8.4zM524 338.5h8.4v8.4h-8.4z"/><path fill="#acacac" d="M324 170.5h8.4v8.4h-8.4zM340 250.5h8.4v8.4h-8.4zM348 258.5h8.4v8.4h-8.4zM356 274.5h8.4v8.4h-8.4zM372 298.5h8.4v8.4h-8.4zM380 306.5h8.4v8.4h-8.4zM476 338.5h8.4v8.4h-8.4zM484 338.5h8.4v8.4h-8.4zM492 338.5h8.4v8.4h-8.4zM500 338.5h8.4v8.4h-8.4zM532 338.5h8.4v8.4h-8.4z"/><path fill="#adadad" d="M324 162.5h8.4v8.4h-8.4zM332 234.5h8.4v8.4h-8.4zM356 266.5h8.4v8.4h-8.4zM364 282.5h8.4v8.4h-8.4zM396 314.5h8.4v8.4h-8.4zM412 322.5h8.4v8.4h-8.4zM436 330.5h8.4v8.4h-8.4z"/><path fill="#aeaeae" d="M332 178.5h8.4v8.4h-8.4zM332 186.5h8.4v8.4h-8.4zM332 226.5h8.4v8.4h-8.4zM340 242.5h8.4v8.4h-8.4zM388 306.5h8.4v8.4h-8.4zM444 330.5h8.4v8.4h-8.4z"/><path fill="#afafaf" d="M332 170.5h8.4v8.4h-8.4zM332 194.5h8.4v8.4h-8.4zM332 202.5h8.4v8.4h-8.4zM332 210.5h8.4v8.4h-8.4zM332 218.5h8.4v8.4h-8.4zM348 250.5h8.4v8.4h-8.4zM372 290.5h8.4v8.4h-8.4zM380 298.5h8.4v8.4h-8.4zM404 314.5h8.4v8.4h-8.4zM420 322.5h8.4v8.4h-8.4zM452 330.5h8.4v8.4h-8.4z"/><path fill="#b0b0b0" d="M332 154.5h8.4v8.4h-8.4zM332 162.5h8.4v8.4h-8.4zM340 234.5h8.4v8.4h-8.4zM356 258.5h8.4v8.4h-8.4zM364 274.5h8.4v8.4h-8.4zM460 330.5h8.4v8.4h-8.4zM468 330.5h8.4v8.4h-8.4zM516 330.5h8.4v8.4h-8.4zM524 330.5h8.4v8.4h-8.4z"/><path fill="#b1b1b1" d="M340 170.5h8.4v8.4h-8.4zM340 178.5h8.4v8.4h-8.4zM340 226.5h8.4v8.4h-8.4zM348 242.5h8.4v8.4h-8.4zM372 282.5h8.4v8.4h-8.4zM396 306.5h8.4v8.4h-8.4zM428 322.5h8.4v8.4h-8.4zM476 330.5h8.4v8.4h-8.4zM484 330.5h8.4v8.4h-8.4zM492 330.5h8.4v8.4h-8.4zM500 330.5h8.4v8.4h-8.4zM508 330.5h8.4v8.4h-8.4zM532 330.5h8.4v8.4h-8.4zM540 330.5h8.4v8.4h-8.4z"/><path fill="#b2b2b2" d="M340 162.5h8.4v8.4h-8.4zM340 186.5h8.4v8.4h-8.4zM340 194.5h8.4v8.4h-8.4zM340 202.5h8.4v8.4h-8.4zM340 210.5h8.4v8.4h-8.4zM340 218.5h8.4v8.4h-8.4zM356 250.5h8.4v8.4h-8.4zM364 266.5h8.4v8.4h-8.4zM380 290.5h8.4v8.4h-8.4zM388 298.5h8.4v8.4h-8.4zM412 314.5h8.4v8.4h-8.4zM436 322.5h8.4v8.4h-8.4z"/><path fill="#b3b3b3" d="M340 154.5h8.4v8.4h-8.4zM348 234.5h8.4v8.4h-8.4zM444 322.5h8.4v8.4h-8.4z"/><path fill="#b4b4b4" d="M348 170.5h8.4v8.4h-8.4zM356 242.5h8.4v8.4h-8.4zM364 258.5h8.4v8.4h-8.4zM372 274.5h8.4v8.4h-8.4zM404 306.5h8.4v8.4h-8.4zM420 314.5h8.4v8.4h-8.4zM452 322.5h8.4v8.4h-8.4z"/><path fill="#b5b5b5" d="M348 154.5h8.4v8.4h-8.4zM348 162.5h8.4v8.4h-8.4zM348 178.5h8.4v8.4h-8.4zM348 186.5h8.4v8.4h-8.4zM348 194.5h8.4v8.4h-8.4zM348 226.5h8.4v8.4h-8.4zM380 282.5h8.4v8.4h-8.4zM388 290.5h8.4v8.4h-8.4zM396 298.5h8.4v8.4h-8.4zM460 322.5h8.4v8.4h-8.4zM468 322.5h8.4v8.4h-8.4zM516 322.5h8.4v8.4h-8.4zM524 322.5h8.4v8.4h-8.4zM532 322.5h8.4v8.4h-8.4z"/><path fill="#b6b6b6" d="M348 202.5h8.4v8.4h-8.4zM348 210.5h8.4v8.4h-8.4zM348 218.5h8.4v8.4h-8.4zM356 234.5h8.4v8.4h-8.4zM364 250.5h8.4v8.4h-8.4zM372 266.5h8.4v8.4h-8.4zM412 306.5h8.4v8.4h-8.4zM428 314.5h8.4v8.4h-8.4zM476 322.5h8.4v8.4h-8.4zM484 322.5h8.4v8.4h-8.4zM492 322.5h8.4v8.4h-8.4zM500 322.5h8.4v8.4h-8.4zM508 322.5h8.4v8.4h-8.4zM540 322.5h8.4v8.4h-8.4z"/><path fill="#b7b7b7" d="M356 162.5h8.4v8.4h-8.4zM356 170.5h8.4v8.4h-8.4zM364 242.5h8.4v8.4h-8.4zM380 274.5h8.4v8.4h-8.4zM404 298.5h8.4v8.4h-8.4zM436 314.5h8.4v8.4h-8.4z"/><path fill="#b8b8b8" d="M356 154.5h8.4v8.4h-8.4zM356 178.5h8.4v8.4h-8.4zM356 186.5h8.4v8.4h-8.4zM356 226.5h8.4v8.4h-8.4zM372 258.5h8.4v8.4h-8.4zM388 282.5h8.4v8.4h-8.4zM396 290.5h8.4v8.4h-8.4zM420 306.5h8.4v8.4h-8.4zM444 314.5h8.4v8.4h-8.4z"/><path fill="#b9b9b9" d="M356 194.5h8.4v8.4h-8.4zM356 202.5h8.4v8.4h-8.4zM356 210.5h8.4v8.4h-8.4zM356 218.5h8.4v8.4h-8.4zM364 234.5h8.4v8.4h-8.4zM412 298.5h8.4v8.4h-8.4zM452 314.5h8.4v8.4h-8.4zM460 314.5h8.4v8.4h-8.4zM524 314.5h8.4v8.4h-8.4z"/><path fill="#bababa" d="M364 154.5h8.4v8.4h-8.4zM364 162.5h8.4v8.4h-8.4zM364 170.5h8.4v8.4h-8.4zM364 226.5h8.4v8.4h-8.4zM372 250.5h8.4v8.4h-8.4zM380 266.5h8.4v8.4h-8.4zM388 274.5h8.4v8.4h-8.4zM404 290.5h8.4v8.4h-8.4zM428 306.5h8.4v8.4h-8.4zM468 314.5h8.4v8.4h-8.4zM476 314.5h8.4v8.4h-8.4zM516 314.5h8.4v8.4h-8.4zM532 314.5h8.4v8.4h-8.4zM540 314.5h8.4v8.4h-8.4z"/><path fill="#bbbbbb" d="M364 178.5h8.4v8.4h-8.4zM364 186.5h8.4v8.4h-8.4zM364 218.5h8.4v8.4h-8.4zM372 242.5h8.4v8.4h-8.4zM396 282.5h8.4v8.4h-8.4zM420 298.5h8.4v8.4h-8.4zM436 306.5h8.4v8.4h-8.4zM484 314.5h8.4v8.4h-8.4zM492 314.5h8.4v8.4h-8.4zM500 314.5h8.4v8.4h-8.4zM508 314.5h8.4v8.4h-8.4z"/><path fill="#bcbcbc" d="M372 154.5h8.4v8.4h-8.4zM372 162.5h8.4v8.4h-8.4zM364 194.5h8.4v8.4h-8.4zM364 202.5h8.4v8.4h-8.4zM364 210.5h8.4v8.4h-8.4zM372 234.5h8.4v8.4h-8.4zM380 258.5h8.4v8.4h-8.4zM412 290.5h8.4v8.4h-8.4zM444 306.5h8.4v8.4h-8.4z"/><path fill="#bdbdbd" d="M372 170.5h8.4v8.4h-8.4zM372 226.5h8.4v8.4h-8.4zM380 250.5h8.4v8.4h-8.4zM388 266.5h8.4v8.4h-8.4zM396 274.5h8.4v8.4h-8.4zM404 282.5h8.4v8.4h-8.4zM428 298.5h8.4v8.4h-8.4zM452 306.5h8.4v8.4h-8.4zM460 306.5h8.4v8.4h-8.4zM524 306.5h8.4v8.4h-8.4zM532 306.5h8.4v8.4h-8.4zM540 306.5h8.4v8.4h-8.4z"/><path fill="#bebebe" d="M372 178.5h8.4v8.4h-8.4zM372 218.5h8.4v8.4h-8.4zM420 290.5h8.4v8.4h-8.4zM468 306.5h8.4v8.4h-8.4zM476 306.5h8.4v8.4h-8.4zM484 306.5h8.4v8.4h-8.4zM508 306.5h8.4v8.4h-8.4zM516 306.5h8.4v8.4h-8.4z"/><path fill="#bfbfbf" d="M380 154.5h8.4v8.4h-8.4zM380 162.5h8.4v8.4h-8.4zM380 170.5h8.4v8.4h-8.4zM372 186.5h8.4v8.4h-8.4zM372 194.5h8.4v8.4h-8.4zM372 202.5h8.4v8.4h-8.4zM372 210.5h8.4v8.4h-8.4zM380 242.5h8.4v8.4h-8.4zM388 258.5h8.4v8.4h-8.4zM396 266.5h8.4v8.4h-8.4zM404 274.5h8.4v8.4h-8.4zM412 282.5h8.4v8.4h-8.4zM436 298.5h8.4v8.4h-8.4zM524 298.5h8.4v8.4h-8.4zM532 298.5h8.4v8.4h-8.4zM540 298.5h8.4v8.4h-8.4zM492 306.5h8.4v8.4h-8.4zM500 306.5h8.4v8.4h-8.4z"/><path fill="#c0c0c0" d="M380 234.5h8.4v8.4h-8.4zM428 290.5h8.4v8.4h-8.4zM444 298.5h8.4v8.4h-8.4zM452 298.5h8.4v8.4h-8.4zM516 298.5h8.4v8.4h-8.4z"/><path fill="#c1c1c1" d="M388 154.5h8.4v8.4h-8.4zM380 178.5h8.4v8.4h-8.4zM380 226.5h8.4v8.4h-8.4zM388 250.5h8.4v8.4h-8.4zM404 266.5h8.4v8.4h-8.4zM412 274.5h8.4v8.4h-8.4zM420 282.5h8.4v8.4h-8.4zM436 290.5h8.4v8.4h-8.4zM524 290.5h8.4v8.4h-8.4zM532 290.5h8.4v8.4h-8.4zM540 290.5h8.4v8.4h-8.4zM460 298.5h8.4v8.4h-8.4zM468 298.5h8.4v8.4h-8.4zM476 298.5h8.4v8.4h-8.4zM484 298.5h8.4v8.4h-8.4zM500 298.5h8.4v8.4h-8.4zM508 298.5h8.4v8.4h-8.4z"/><path fill="#c2c2c2" d="M388 162.5h8.4v8.4h-8.4zM388 170.5h8.4v8.4h-8.4zM380 186.5h8.4v8.4h-8.4zM380 218.5h8.4v8.4h-8.4zM500 218.5h8.4v8.4h-8.4zM508 218.5h8.4v8.4h-8.4zM500 226.5h8.4v8.4h-8.4zM508 226.5h8.4v8.4h-8.4zM516 226.5h8.4v8.4h-8.4zM500 234.5h8.4v8.4h-8.4zM396 258.5h8.4v8.4h-8.4zM428 282.5h8.4v8.4h-8.4zM532 282.5h8.4v8.4h-8.4zM444 290.5h8.4v8.4h-8.4zM516 290.5h8.4v8.4h-8.4zM492 298.5h8.4v8.4h-8.4z"/><path fill="#c3c3c3" d="M380 194.5h8.4v8.4h-8.4zM380 202.5h8.4v8.4h-8.4zM380 210.5h8.4v8.4h-8.4zM500 210.5h8.4v8.4h-8.4zM492 218.5h8.4v8.4h-8.4zM492 226.5h8.4v8.4h-8.4zM492 234.5h8.4v8.4h-8.4zM508 234.5h8.4v8.4h-8.4zM516 234.5h8.4v8.4h-8.4zM388 242.5h8.4v8.4h-8.4zM500 242.5h8.4v8.4h-8.4zM508 242.5h8.4v8.4h-8.4zM516 242.5h8.4v8.4h-8.4zM524 242.5h8.4v8.4h-8.4zM508 250.5h8.4v8.4h-8.4zM412 266.5h8.4v8.4h-8.4zM420 274.5h8.4v8.4h-8.4zM524 274.5h8.4v8.4h-8.4zM532 274.5h8.4v8.4h-8.4zM516 282.5h8.4v8.4h-8.4zM524 282.5h8.4v8.4h-8.4zM452 290.5h8.4v8.4h-8.4zM460 290.5h8.4v8.4h-8.4zM500 290.5h8.4v8.4h-8.4zM508 290.5h8.4v8.4h-8.4z"/><path fill="#c4c4c4" d="M396 154.5h8.4v8.4h-8.4zM396 162.5h8.4v8.4h-8.4zM388 178.5h8.4v8.4h-8.4zM492 202.5h8.4v8.4h-8.4zM500 202.5h8.4v8.4h-8.4zM484 210.5h8.4v8.4h-8.4zM492 210.5h8.4v8.4h-8.4zM484 218.5h8.4v8.4h-8.4zM484 226.5h8.4v8.4h-8.4zM396 250.5h8.4v8.4h-8.4zM500 250.5h8.4v8.4h-8.4zM516 250.5h8.4v8.4h-8.4zM524 250.5h8.4v8.4h-8.4zM404 258.5h8.4v8.4h-8.4zM508 258.5h8.4v8.4h-8.4zM516 258.5h8.4v8.4h-8.4zM524 258.5h8.4v8.4h-8.4zM532 258.5h8.4v8.4h-8.4zM516 266.5h8.4v8.4h-8.4zM524 266.5h8.4v8.4h-8.4zM532 266.5h8.4v8.4h-8.4zM428 274.5h8.4v8.4h-8.4zM516 274.5h8.4v8.4h-8.4zM436 282.5h8.4v8.4h-8.4zM444 282.5h8.4v8.4h-8.4zM508 282.5h8.4v8.4h-8.4zM468 290.5h8.4v8.4h-8.4zM476 290.5h8.4v8.4h-8.4zM484 290.5h8.4v8.4h-8.4zM492 290.5h8.4v8.4h-8.4z"/><path fill="#c5c5c5" d="M404 154.5h8.4v8.4h-8.4zM396 170.5h8.4v8.4h-8.4zM388 186.5h8.4v8.4h-8.4zM388 194.5h8.4v8.4h-8.4zM492 194.5h8.4v8.4h-8.4zM484 202.5h8.4v8.4h-8.4zM476 210.5h8.4v8.4h-8.4zM388 234.5h8.4v8.4h-8.4zM484 234.5h8.4v8.4h-8.4zM492 242.5h8.4v8.4h-8.4zM492 250.5h8.4v8.4h-8.4zM412 258.5h8.4v8.4h-8.4zM500 258.5h8.4v8.4h-8.4zM420 266.5h8.4v8.4h-8.4zM508 266.5h8.4v8.4h-8.4zM436 274.5h8.4v8.4h-8.4zM500 274.5h8.4v8.4h-8.4zM508 274.5h8.4v8.4h-8.4zM452 282.5h8.4v8.4h-8.4zM460 282.5h8.4v8.4h-8.4zM484 282.5h8.4v8.4h-8.4zM492 282.5h8.4v8.4h-8.4zM500 282.5h8.4v8.4h-8.4z"/><path fill="#c6c6c6" d="M412 154.5h8.4v8.4h-8.4zM404 162.5h8.4v8.4h-8.4zM404 170.5h8.4v8.4h-8.4zM396 178.5h8.4v8.4h-8.4zM484 186.5h8.4v8.4h-8.4zM476 194.5h8.4v8.4h-8.4zM484 194.5h8.4v8.4h-8.4zM388 202.5h8.4v8.4h-8.4zM476 202.5h8.4v8.4h-8.4zM388 210.5h8.4v8.4h-8.4zM476 218.5h8.4v8.4h-8.4zM388 226.5h8.4v8.4h-8.4zM476 226.5h8.4v8.4h-8.4zM396 242.5h8.4v8.4h-8.4zM484 242.5h8.4v8.4h-8.4zM404 250.5h8.4v8.4h-8.4zM420 258.5h8.4v8.4h-8.4zM492 258.5h8.4v8.4h-8.4zM428 266.5h8.4v8.4h-8.4zM492 266.5h8.4v8.4h-8.4zM500 266.5h8.4v8.4h-8.4zM444 274.5h8.4v8.4h-8.4zM492 274.5h8.4v8.4h-8.4zM468 282.5h8.4v8.4h-8.4zM476 282.5h8.4v8.4h-8.4z"/><path fill="#c7c7c7" d="M420 154.5h8.4v8.4h-8.4zM412 162.5h8.4v8.4h-8.4zM420 162.5h8.4v8.4h-8.4zM428 162.5h8.4v8.4h-8.4zM436 162.5h8.4v8.4h-8.4zM444 162.5h8.4v8.4h-8.4zM412 170.5h8.4v8.4h-8.4zM420 170.5h8.4v8.4h-8.4zM428 170.5h8.4v8.4h-8.4zM436 170.5h8.4v8.4h-8.4zM444 170.5h8.4v8.4h-8.4zM452 170.5h8.4v8.4h-8.4zM460 170.5h8.4v8.4h-8.4zM404 178.5h8.4v8.4h-8.4zM428 178.5h8.4v8.4h-8.4zM436 178.5h8.4v8.4h-8.4zM444 178.5h8.4v8.4h-8.4zM452 178.5h8.4v8.4h-8.4zM460 178.5h8.4v8.4h-8.4zM468 178.5h8.4v8.4h-8.4zM396 186.5h8.4v8.4h-8.4zM444 186.5h8.4v8.4h-8.4zM452 186.5h8.4v8.4h-8.4zM460 186.5h8.4v8.4h-8.4zM468 186.5h8.4v8.4h-8.4zM476 186.5h8.4v8.4h-8.4zM460 194.5h8.4v8.4h-8.4zM468 194.5h8.4v8.4h-8.4zM468 202.5h8.4v8.4h-8.4zM468 210.5h8.4v8.4h-8.4zM388 218.5h8.4v8.4h-8.4zM468 218.5h8.4v8.4h-8.4zM476 234.5h8.4v8.4h-8.4zM404 242.5h8.4v8.4h-8.4zM476 242.5h8.4v8.4h-8.4zM412 250.5h8.4v8.4h-8.4zM484 250.5h8.4v8.4h-8.4zM428 258.5h8.4v8.4h-8.4zM484 258.5h8.4v8.4h-8.4zM436 266.5h8.4v8.4h-8.4zM484 266.5h8.4v8.4h-8.4zM452 274.5h8.4v8.4h-8.4zM460 274.5h8.4v8.4h-8.4zM468 274.5h8.4v8.4h-8.4zM476 274.5h8.4v8.4h-8.4zM484 274.5h8.4v8.4h-8.4z"/><path fill="#c8c8c8" d="M412 178.5h8.4v8.4h-8.4zM420 178.5h8.4v8.4h-8.4zM404 186.5h8.4v8.4h-8.4zM428 186.5h8.4v8.4h-8.4zM436 186.5h8.4v8.4h-8.4zM396 194.5h8.4v8.4h-8.4zM436 194.5h8.4v8.4h-8.4zM444 194.5h8.4v8.4h-8.4zM452 194.5h8.4v8.4h-8.4zM396 202.5h8.4v8.4h-8.4zM460 202.5h8.4v8.4h-8.4zM460 210.5h8.4v8.4h-8.4zM468 226.5h8.4v8.4h-8.4zM396 234.5h8.4v8.4h-8.4zM468 234.5h8.4v8.4h-8.4zM412 242.5h8.4v8.4h-8.4zM468 242.5h8.4v8.4h-8.4zM420 250.5h8.4v8.4h-8.4zM468 250.5h8.4v8.4h-8.4zM476 250.5h8.4v8.4h-8.4zM436 258.5h8.4v8.4h-8.4zM468 258.5h8.4v8.4h-8.4zM476 258.5h8.4v8.4h-8.4zM444 266.5h8.4v8.4h-8.4zM452 266.5h8.4v8.4h-8.4zM460 266.5h8.4v8.4h-8.4zM468 266.5h8.4v8.4h-8.4zM476 266.5h8.4v8.4h-8.4z"/><path fill="#c9c9c9" d="M412 186.5h8.4v8.4h-8.4zM420 186.5h8.4v8.4h-8.4zM404 194.5h8.4v8.4h-8.4zM412 194.5h8.4v8.4h-8.4zM420 194.5h8.4v8.4h-8.4zM428 194.5h8.4v8.4h-8.4zM436 202.5h8.4v8.4h-8.4zM444 202.5h8.4v8.4h-8.4zM452 202.5h8.4v8.4h-8.4zM396 210.5h8.4v8.4h-8.4zM452 210.5h8.4v8.4h-8.4zM396 218.5h8.4v8.4h-8.4zM452 218.5h8.4v8.4h-8.4zM460 218.5h8.4v8.4h-8.4zM396 226.5h8.4v8.4h-8.4zM460 226.5h8.4v8.4h-8.4zM404 234.5h8.4v8.4h-8.4zM412 234.5h8.4v8.4h-8.4zM460 234.5h8.4v8.4h-8.4zM420 242.5h8.4v8.4h-8.4zM428 242.5h8.4v8.4h-8.4zM460 242.5h8.4v8.4h-8.4zM428 250.5h8.4v8.4h-8.4zM436 250.5h8.4v8.4h-8.4zM444 250.5h8.4v8.4h-8.4zM452 250.5h8.4v8.4h-8.4zM460 250.5h8.4v8.4h-8.4zM444 258.5h8.4v8.4h-8.4zM452 258.5h8.4v8.4h-8.4zM460 258.5h8.4v8.4h-8.4z"/><path fill="#cacaca" d="M404 202.5h8.4v8.4h-8.4zM412 202.5h8.4v8.4h-8.4zM420 202.5h8.4v8.4h-8.4zM428 202.5h8.4v8.4h-8.4zM404 210.5h8.4v8.4h-8.4zM412 210.5h8.4v8.4h-8.4zM420 210.5h8.4v8.4h-8.4zM428 210.5h8.4v8.4h-8.4zM436 210.5h8.4v8.4h-8.4zM444 210.5h8.4v8.4h-8.4zM404 218.5h8.4v8.4h-8.4zM412 218.5h8.4v8.4h-8.4zM420 218.5h8.4v8.4h-8.4zM428 218.5h8.4v8.4h-8.4zM436 218.5h8.4v8.4h-8.4zM444 218.5h8.4v8.4h-8.4zM404 226.5h8.4v8.4h-8.4zM412 226.5h8.4v8.4h-8.4zM420 226.5h8.4v8.4h-8.4zM428 226.5h8.4v8.4h-8.4zM436 226.5h8.4v8.4h-8.4zM444 226.5h8.4v8.4h-8.4zM452 226.5h8.4v8.4h-8.4zM420 234.5h8.4v8.4h-8.4zM428 234.5h8.4v8.4h-8.4zM436 234.5h8.4v8.4h-8.4zM444 234.5h8.4v8.4h-8.4zM452 234.5h8.4v8.4h-8.4zM436 242.5h8.4v8.4h-8.4zM444 242.5h8.4v8.4h-8.4zM452 242.5h8.4v8.4h-8.4z"/></g></g><!--/SPHERE-->
</svg>
</div>

<div id="vscroll" class="abs"><div id="vthumb" class="abs"></div>
  <div class="abs" style="left:5px;top:452px;width:6px;height:1px;background:#666;box-shadow:0 2px 0 #666,0 4px 0 #666,0 6px 0 #666"></div>
</div>

<div id="dock" class="abs">
  <div class="ipanel abs" style="top:-4px;height:35px;"><div class="abs" style="left:2px;top:4px;width:23px;height:1px;background:#d6d6d6;"></div>
    <div class="ibtn abs" style="top:9px;"></div>
    <svg class="abs" style="left:7px;top:14px" width="14" height="16" viewBox="0 0 14 16">
      <path d="M7.500 0.300 L5 0.300 A4.100 4.100 0 0 0 5 8.500 L7.500 8.500 Z" fill="#4c4c4c"/>
      <rect x="4.500" y="0.300" width="6.800" height="1.200" fill="#4a4a4a"/>
      <rect x="6.900" y="0.300" width="1.300" height="13.700" fill="#3c3c3c"/>
      <rect x="9.900" y="0.300" width="1.400" height="13.700" fill="#3c3c3c"/>
    </svg>
  </div>
  <div class="ipanel abs" style="top:34px;height:41px;">
    <div class="abs" style="left:0;top:0;width:27px;height:8px;background:linear-gradient(#e0e0e0,#cfcfcf);border-radius:3px 3px 0 0;"></div>
    <div class="ibtn abs" style="top:14px;"></div>
    <svg class="abs" style="left:5px;top:17px" width="17" height="17" viewBox="0 0 17 17">
      <rect x="0.5" y="0.5" width="15" height="15" fill="#fff" stroke="#222" stroke-width="1.4"/>
      <rect x="2.5" y="3" width="6" height="1.2" fill="#333"/>
      <rect x="2.5" y="5.5" width="6" height="1.2" fill="#333"/>
      <rect x="2.5" y="8" width="6" height="1.2" fill="#333"/>
      <rect x="9.5" y="3" width="4" height="6.5" fill="#777"/>
      <rect x="2.5" y="10.5" width="11" height="3" fill="#666"/>
    </svg>
  </div>
</div>

<div id="panel" class="abs">
  <!-- colour ramp -->
  <svg class="abs" style="left:8px;top:0" width="200" height="12" viewBox="0 0 200 12">
    <defs>
      <linearGradient id="hue" x1="0" y1="0" x2="1" y2="0">
        <stop offset="0" stop-color="#e8202a"/><stop offset="0.08" stop-color="#f08020"/>
        <stop offset="0.17" stop-color="#f6ea1c"/><stop offset="0.25" stop-color="#8cc630"/>
        <stop offset="0.33" stop-color="#10a048"/><stop offset="0.42" stop-color="#10a890"/>
        <stop offset="0.5" stop-color="#18a8e0"/><stop offset="0.58" stop-color="#2070c0"/>
        <stop offset="0.67" stop-color="#303090"/><stop offset="0.75" stop-color="#702888"/>
        <stop offset="0.83" stop-color="#c02088"/><stop offset="0.92" stop-color="#e02060"/>
        <stop offset="1" stop-color="#e02028"/>
      </linearGradient>
      <linearGradient id="blk" x1="0" y1="0" x2="0" y2="1">
        <stop offset="0" stop-color="#fff" stop-opacity="0.55"/>
        <stop offset="0.4" stop-color="#fff" stop-opacity="0"/>
        <stop offset="0.4" stop-color="#000" stop-opacity="0"/>
        <stop offset="1" stop-color="#000" stop-opacity="1"/>
      </linearGradient>
    </defs>
    <rect x="0" y="0" width="190" height="11.5" fill="url(#hue)"/>
    <rect x="0" y="0" width="190" height="11.5" fill="url(#blk)"/>
    <rect x="190" y="0" width="8.5" height="4" fill="#fff"/>
    <rect x="190" y="4" width="8.5" height="7.5" fill="#000"/>
  </svg>
  <div class="abs" style="left:0;top:23px;width:247px;height:2px;background:#585858;"></div>

  <div id="tabbar" class="abs">
    <div class="tab act abs" style="left:5px;width:46px;text-align:left;padding-left:6px;">图层<svg class="abs" style="left:31px;top:6px" width="9" height="9" viewBox="0 0 9 9"><path d="M0.700 0.700 L8 8 M8 0.700 L0.700 8" stroke="#7a7a7a" stroke-width="1.100" fill="none"/></svg></div>
    <div class="tab abs" style="left:52px;width:36px;">通道</div>
    <div class="tab abs" style="left:89px;width:36px;">路径</div>
    <svg class="abs" style="left:225px;top:0" width="22" height="26" viewBox="0 0 22 26">
      <path d="M2 26 L5.300 25.300 L13.400 17.700 L22 13.300 L22 26 Z" fill="#ededed"/>
      <path d="M2 25.500 L5.300 24.800 L13.400 17.200 L22 12.800" fill="none" stroke="#fafafa" stroke-width="1"/>
      <rect x="5" y="7" width="7" height="1.4" fill="#666"/>
      <path d="M17 3 L23 9 M23 3 L17 9" stroke="#777" stroke-width="1.2" fill="none"/>
      <path d="M11.5 20.5 L16.5 20.5 L14 23.5 Z" fill="#444"/>
      <rect x="18" y="19" width="4" height="1.2" fill="#444"/>
      <rect x="18" y="21.5" width="4" height="1.2" fill="#444"/>
      <rect x="18" y="24" width="4" height="1.2" fill="#444"/>
    </svg>
  </div>
  <div class="abs" style="left:0;top:51px;width:247px;height:1px;background:#fbfbfb;"></div>

  <!-- blend mode / opacity row -->
  <div class="abs" style="left:4px;top:55px;width:92px;height:22px;box-sizing:border-box;border:1px solid #b4b4b4;border-radius:3px;background:#fff;">
    <div class="abs gray" style="left:6px;top:3px;font-size:13px;line-height:15px;color:#4c4c4c;">正常</div>
    <div class="abs" style="left:73px;top:0;width:1px;height:20px;background:#ececec;"></div>
    <svg class="abs" style="left:79px;top:8px" width="8" height="5"><path d="M0 0 L7 0 L3.5 4 Z" fill="#a0a0a0"/></svg>
  </div>
  <div class="abs gray" style="left:99px;top:58px;font-size:13px;line-height:15px;letter-spacing:-0.6px;">不透明度:</div>
  <div class="box abs" style="left:153px;top:55px;width:57px;height:19px;">
    <div class="abs" style="left:4px;top:2px;font-size:11px;line-height:15px;color:#555;">100%</div>
    <div class="abs" style="left:38px;top:0;width:1px;height:17px;background:#b6b6b6;"></div>
    <svg class="abs" style="left:45px;top:6px" width="5" height="7"><path d="M0.500 0 L4 3 L0.500 6 Z" fill="#8c8c8c"/></svg>
  </div>
  <div class="hline abs" style="left:3px;top:78px;width:244px;background:#b9b9b9;"></div>
  <div class="abs" style="left:3px;top:79px;width:244px;height:1px;background:#f8f8f8;"></div>

  <!-- lock / fill row -->
  <div class="abs gray" style="left:7px;top:85px;font-size:13px;line-height:15px;letter-spacing:-0.5px;">锁定:</div>
  <svg class="abs" style="left:36px;top:80px" width="80" height="24" viewBox="0 0 80 24">
    <rect x="6.500" y="6.500" width="10" height="10" fill="#fcfcfc" stroke="#8c8c8c"/>
    <rect x="7" y="7" width="3" height="3" fill="#dedede"/><rect x="13" y="7" width="3" height="3" fill="#dedede"/>
    <rect x="10" y="10" width="3" height="3" fill="#dedede"/><rect x="7" y="13" width="3" height="3" fill="#dedede"/><rect x="13" y="13" width="3" height="3" fill="#dedede"/>
    <path d="M35 6.300 L30.300 11.300" stroke="#7a7a7a" stroke-width="1.300" fill="none"/>
    <path d="M31.200 10.600 C30.500 13.500 27.500 16.500 23.300 17.300 C26 15.200 27.800 12.500 29.300 10 Z" fill="#e4e4e4" stroke="#777" stroke-width="0.900"/>
    <path d="M45.600 6.500 L45.600 17 M40.600 11.700 L50.800 11.700" stroke="#666" stroke-width="1.100" fill="none"/>
    <path d="M43.800 8.300 L45.600 6 L47.400 8.300 Z M43.800 15.300 L45.600 17.600 L47.400 15.300 Z M42.300 9.900 L40 11.700 L42.300 13.500 Z M49.100 9.900 L51.400 11.700 L49.100 13.500 Z" fill="#666"/>
    <path d="M57.800 16.800 L57.800 11.400 A4.700 4.700 0 0 1 67.200 11.400 L67.200 16.800 Z" fill="#7c7c7c"/>
    <path d="M60.300 12 L60.300 11 A2.200 2.200 0 0 1 64.700 11 L64.700 12 Z" fill="#b4b4b4"/>
    <rect x="57.800" y="15.800" width="9.400" height="1" fill="#5a5a5a"/>
  </svg>
  <div class="abs gray" style="left:123px;top:85px;font-size:13px;line-height:15px;letter-spacing:-0.5px;">填充:</div>
  <div class="box abs" style="left:153px;top:83px;width:57px;height:19px;">
    <div class="abs" style="left:4px;top:2px;font-size:11px;line-height:15px;color:#555;">100%</div>
    <div class="abs" style="left:38px;top:0;width:1px;height:17px;background:#b6b6b6;"></div>
    <svg class="abs" style="left:45px;top:6px" width="5" height="7"><path d="M0.500 0 L4 3 L0.500 6 Z" fill="#8c8c8c"/></svg>
  </div>

  <!-- layer list -->
  <div id="layers" class="abs" style="left:0;top:105px;width:247px;height:483px;">
    <div class="hline abs" style="left:0;top:0;width:247px;background:#9d9d9d;"></div>
    <div class="abs" style="left:24px;top:1px;width:1px;height:335px;background:#b0b0b0;"></div>
    <div class="abs" style="left:237px;top:1px;width:10px;height:482px;background:#f1f1f1;"></div>
    <div class="eye abs" style="top:4px;"><svg class="abs" style="left:1px;top:2px" width="13" height="11" viewBox="0 0 13 11"><path d="M0.800 5.200 C2.500 1.800 8.500 1 12 4.200 C11 7.800 4.500 10.200 1.500 7 Z" fill="#fafafa"/><path d="M0.700 5.400 C2.500 1.600 9 1 12.200 4.600" fill="none" stroke="#0a0a0a" stroke-width="1.300"/><path d="M1.200 3.600 C3.500 0.400 9 0.200 11.800 2.800" fill="none" stroke="#3a3a3a" stroke-width="0.800"/><ellipse cx="5.600" cy="5" rx="3.300" ry="2.900" fill="#0a0a0a"/><circle cx="4.700" cy="4.500" r="0.950" fill="#fff"/><path d="M1.500 7 C3.500 10 9 9.600 11.600 5.600" fill="none" stroke="#0a0a0a" stroke-width="1.200"/></svg></div>
    <svg class="abs" style="left:28px;top:9px" width="11" height="10"><path d="M0.500 0 L10 0 L5.200 9 Z" fill="#8c8c8c"/></svg>
    <svg class="abs" style="left:46px;top:6px" width="16" height="13" viewBox="0 0 16 13"><path d="M0.500 2.500 C0.500 1 1.500 0.500 2.500 0.500 L5.500 0.500 L7 2 L13.500 2 C14.500 2 15 2.800 15 3.500 L15 11 L0.500 11 Z" fill="#c4c4c4" stroke="#9a9a9a" stroke-width="0.8"/><rect x="0.500" y="10.500" width="14.500" height="1.600" fill="#3c3c3c"/></svg>
    <div class="lname abs" style="left:74px;top:5px;">后期的调成</div>
    <div class="hline abs" style="left:40px;top:23px;width:197px;"></div>
    <svg class="abs" style="left:60px;top:-5px" width="99" height="30" viewBox="0 0 99 30"><rect x="3.400" y="2.400" width="92.200" height="24.200" fill="none" stroke="#dc3a3a" stroke-width="2.800"/></svg>
    <div class="eye abs" style="top:35px;"><svg class="abs" style="left:1px;top:2px" width="13" height="11" viewBox="0 0 13 11"><path d="M0.800 5.200 C2.500 1.800 8.500 1 12 4.200 C11 7.800 4.500 10.200 1.500 7 Z" fill="#fafafa"/><path d="M0.700 5.400 C2.500 1.600 9 1 12.200 4.600" fill="none" stroke="#0a0a0a" stroke-width="1.300"/><path d="M1.200 3.600 C3.500 0.400 9 0.200 11.800 2.800" fill="none" stroke="#3a3a3a" stroke-width="0.800"/><ellipse cx="5.600" cy="5" rx="3.300" ry="2.900" fill="#0a0a0a"/><circle cx="4.700" cy="4.500" r="0.950" fill="#fff"/><path d="M1.500 7 C3.500 10 9 9.600 11.600 5.600" fill="none" stroke="#0a0a0a" stroke-width="1.200"/></svg></div>
    <svg class="abs" style="left:50px;top:40px" width="8" height="9" viewBox="0 0 8 9"><path d="M7 0.700 L3 0.700 L3 6.500" fill="none" stroke="#222" stroke-width="1.200"/><path d="M0.300 4.300 L5.700 4.300 L3 7.800 Z" fill="#222"/></svg>
    <div class="thumb abs" style="left:60px;top:27px;"><div class="abs" style="left:10px;top:21px;width:6px;height:8px;background:#b0b0b0;border-radius:3px 1px 3px 1px;"></div></div>
    <div class="lname abs" style="left:92px;top:36px;">漫反射反光</div>
    <div class="hline abs" style="left:56px;top:62px;width:181px;"></div>
    <div class="eye abs" style="top:74px;"><svg class="abs" style="left:1px;top:2px" width="13" height="11" viewBox="0 0 13 11"><path d="M0.800 5.200 C2.500 1.800 8.500 1 12 4.200 C11 7.800 4.500 10.200 1.500 7 Z" fill="#fafafa"/><path d="M0.700 5.400 C2.500 1.600 9 1 12.200 4.600" fill="none" stroke="#0a0a0a" stroke-width="1.300"/><path d="M1.200 3.600 C3.500 0.400 9 0.200 11.800 2.800" fill="none" stroke="#3a3a3a" stroke-width="0.800"/><ellipse cx="5.600" cy="5" rx="3.300" ry="2.900" fill="#0a0a0a"/><circle cx="4.700" cy="4.500" r="0.950" fill="#fff"/><path d="M1.500 7 C3.500 10 9 9.600 11.600 5.600" fill="none" stroke="#0a0a0a" stroke-width="1.200"/></svg></div>
    <svg class="abs" style="left:50px;top:79px" width="8" height="9" viewBox="0 0 8 9"><path d="M7 0.700 L3 0.700 L3 6.500" fill="none" stroke="#222" stroke-width="1.200"/><path d="M0.300 4.300 L5.700 4.300 L3 7.800 Z" fill="#222"/></svg>
    <div class="thumb abs" style="left:60px;top:66px;"><div class="abs" style="left:14px;top:20px;width:5px;height:5px;background:#e2e2e2;border-radius:3px;"></div></div>
    <div class="lname abs" style="left:92px;top:75px;">亮部</div>
    <div class="hline abs" style="left:56px;top:101px;width:181px;"></div>
    <div class="eye abs" style="top:113px;"><svg class="abs" style="left:1px;top:2px" width="13" height="11" viewBox="0 0 13 11"><path d="M0.800 5.200 C2.500 1.800 8.500 1 12 4.200 C11 7.800 4.500 10.200 1.500 7 Z" fill="#fafafa"/><path d="M0.700 5.400 C2.500 1.600 9 1 12.200 4.600" fill="none" stroke="#0a0a0a" stroke-width="1.300"/><path d="M1.200 3.600 C3.500 0.400 9 0.200 11.800 2.800" fill="none" stroke="#3a3a3a" stroke-width="0.800"/><ellipse cx="5.600" cy="5" rx="3.300" ry="2.900" fill="#0a0a0a"/><circle cx="4.700" cy="4.500" r="0.950" fill="#fff"/><path d="M1.500 7 C3.500 10 9 9.600 11.600 5.600" fill="none" stroke="#0a0a0a" stroke-width="1.200"/></svg></div>
    <svg class="abs" style="left:50px;top:118px" width="8" height="9" viewBox="0 0 8 9"><path d="M7 0.700 L3 0.700 L3 6.500" fill="none" stroke="#222" stroke-width="1.200"/><path d="M0.300 4.300 L5.700 4.300 L3 7.800 Z" fill="#222"/></svg>
    <div class="thumb abs" style="left:60px;top:105px;"><div class="abs" style="left:9px;top:19px;width:13px;height:10px;background:radial-gradient(circle at 75% 0%,transparent 38%,#6a6a6a 52%,#8a8a8a 100%);border-radius:2px 6px 5px 8px;"></div></div>
    <div class="lname abs" style="left:92px;top:114px;">暗部</div>
    <div class="hline abs" style="left:56px;top:140px;width:181px;"></div>
    <div class="eye abs" style="top:152px;"><svg class="abs" style="left:1px;top:2px" width="13" height="11" viewBox="0 0 13 11"><path d="M0.800 5.200 C2.500 1.800 8.500 1 12 4.200 C11 7.800 4.500 10.200 1.500 7 Z" fill="#fafafa"/><path d="M0.700 5.400 C2.500 1.600 9 1 12.200 4.600" fill="none" stroke="#0a0a0a" stroke-width="1.300"/><path d="M1.200 3.600 C3.500 0.400 9 0.200 11.800 2.800" fill="none" stroke="#3a3a3a" stroke-width="0.800"/><ellipse cx="5.600" cy="5" rx="3.300" ry="2.900" fill="#0a0a0a"/><circle cx="4.700" cy="4.500" r="0.950" fill="#fff"/><path d="M1.500 7 C3.500 10 9 9.600 11.600 5.600" fill="none" stroke="#0a0a0a" stroke-width="1.200"/></svg></div>
    <div class="thumb abs" style="left:44px;top:144px;"><div class="abs" style="left:12px;top:20px;width:6px;height:6px;background:#b9b9b9;border-radius:3px;"></div></div>
    <div class="lname u abs" style="left:76px;top:153px;">球体</div>
    <div class="hline abs" style="left:40px;top:179px;width:197px;"></div>
    <div class="eye abs" style="top:191px;"><svg class="abs" style="left:1px;top:2px" width="13" height="11" viewBox="0 0 13 11"><path d="M0.800 5.200 C2.500 1.800 8.500 1 12 4.200 C11 7.800 4.500 10.200 1.500 7 Z" fill="#fafafa"/><path d="M0.700 5.400 C2.500 1.600 9 1 12.200 4.600" fill="none" stroke="#0a0a0a" stroke-width="1.300"/><path d="M1.200 3.600 C3.500 0.400 9 0.200 11.800 2.800" fill="none" stroke="#3a3a3a" stroke-width="0.800"/><ellipse cx="5.600" cy="5" rx="3.300" ry="2.900" fill="#0a0a0a"/><circle cx="4.700" cy="4.500" r="0.950" fill="#fff"/><path d="M1.500 7 C3.500 10 9 9.600 11.600 5.600" fill="none" stroke="#0a0a0a" stroke-width="1.200"/></svg></div>
    <svg class="abs" style="left:50px;top:196px" width="8" height="9" viewBox="0 0 8 9"><path d="M7 0.700 L3 0.700 L3 6.500" fill="none" stroke="#222" stroke-width="1.200"/><path d="M0.300 4.300 L5.700 4.300 L3 7.800 Z" fill="#222"/></svg>
    <div class="thumb abs" style="left:60px;top:183px;"><div class="abs" style="left:14px;top:26px;width:4px;height:1px;background:#666;"></div></div>
    <div class="lname abs" style="left:92px;top:192px;">卡点闭塞</div>
    <div class="hline abs" style="left:56px;top:218px;width:181px;"></div>
    <div class="eye abs" style="top:230px;"><svg class="abs" style="left:1px;top:2px" width="13" height="11" viewBox="0 0 13 11"><path d="M0.800 5.200 C2.500 1.800 8.500 1 12 4.200 C11 7.800 4.500 10.200 1.500 7 Z" fill="#fafafa"/><path d="M0.700 5.400 C2.500 1.600 9 1 12.200 4.600" fill="none" stroke="#0a0a0a" stroke-width="1.300"/><path d="M1.200 3.600 C3.500 0.400 9 0.200 11.800 2.800" fill="none" stroke="#3a3a3a" stroke-width="0.800"/><ellipse cx="5.600" cy="5" rx="3.300" ry="2.900" fill="#0a0a0a"/><circle cx="4.700" cy="4.500" r="0.950" fill="#fff"/><path d="M1.500 7 C3.500 10 9 9.600 11.600 5.600" fill="none" stroke="#0a0a0a" stroke-width="1.200"/></svg></div>
    <svg class="abs" style="left:50px;top:235px" width="8" height="9" viewBox="0 0 8 9"><path d="M7 0.700 L3 0.700 L3 6.500" fill="none" stroke="#222" stroke-width="1.200"/><path d="M0.300 4.300 L5.700 4.300 L3 7.800 Z" fill="#222"/></svg>
    <div class="thumb abs" style="left:60px;top:222px;"><div class="abs" style="left:8px;top:21px;width:12px;height:7px;background:#a8a8a8;border-radius:5px 3px 4px 2px;transform:rotate(20deg);"></div></div>
    <div class="lname abs" style="left:92px;top:231px;">投影漫反射与渐变</div>
    <div class="hline abs" style="left:56px;top:257px;width:181px;"></div>
    <div class="eye abs" style="top:269px;"><svg class="abs" style="left:1px;top:2px" width="13" height="11" viewBox="0 0 13 11"><path d="M0.800 5.200 C2.500 1.800 8.500 1 12 4.200 C11 7.800 4.500 10.200 1.500 7 Z" fill="#fafafa"/><path d="M0.700 5.400 C2.500 1.600 9 1 12.200 4.600" fill="none" stroke="#0a0a0a" stroke-width="1.300"/><path d="M1.200 3.600 C3.500 0.400 9 0.200 11.800 2.800" fill="none" stroke="#3a3a3a" stroke-width="0.800"/><ellipse cx="5.600" cy="5" rx="3.300" ry="2.900" fill="#0a0a0a"/><circle cx="4.700" cy="4.500" r="0.950" fill="#fff"/><path d="M1.500 7 C3.500 10 9 9.600 11.600 5.600" fill="none" stroke="#0a0a0a" stroke-width="1.200"/></svg></div>
    <div class="thumb abs" style="left:44px;top:261px;"><div class="abs" style="left:12px;top:25px;width:7px;height:2px;background:#9a9a9a;border-radius:1px;"></div></div>
    <div class="lname u abs" style="left:76px;top:270px;">投影</div>
    <div class="abs" style="left:25px;top:296px;width:212px;height:40px;background:#3399ff;"></div>
    <div class="eye abs" style="top:308px;"><svg class="abs" style="left:1px;top:2px" width="13" height="11" viewBox="0 0 13 11"><path d="M0.800 5.200 C2.500 1.800 8.500 1 12 4.200 C11 7.800 4.500 10.200 1.500 7 Z" fill="#fafafa"/><path d="M0.700 5.400 C2.500 1.600 9 1 12.200 4.600" fill="none" stroke="#0a0a0a" stroke-width="1.300"/><path d="M1.200 3.600 C3.500 0.400 9 0.200 11.800 2.800" fill="none" stroke="#3a3a3a" stroke-width="0.800"/><ellipse cx="5.600" cy="5" rx="3.300" ry="2.900" fill="#0a0a0a"/><circle cx="4.700" cy="4.500" r="0.950" fill="#fff"/><path d="M1.500 7 C3.500 10 9 9.600 11.600 5.600" fill="none" stroke="#0a0a0a" stroke-width="1.200"/></svg></div>
    <div class="abs" style="left:26px;top:298px;width:28px;height:36px;box-sizing:border-box;border:1px solid #000;background:#fff;outline:1px solid #fff;outline-offset:-3px;"><div class="abs" style="left:1px;top:1px;right:1px;bottom:1px;border:1px solid #000;background:#fff;"></div></div>
    <div class="lname abs" style="left:61px;top:309px;color:#fff;font-style:italic;">背景</div>
    <svg class="abs" style="left:211px;top:311px" width="11" height="11" viewBox="0 0 11 11"><rect x="1" y="4.500" width="9" height="6" fill="#fff" stroke="#555" stroke-width="0.8"/><path d="M3 4.500 L3 3 C3 0.500 8 0.500 8 3 L8 4.500" fill="none" stroke="#eee" stroke-width="1.400"/><rect x="4.500" y="6.500" width="2" height="2.500" fill="#333"/></svg>
    <div class="hline abs" style="left:0;top:336px;width:25px;background:#b0b0b0;"></div>
    <div class="hline abs" style="left:25px;top:336px;width:212px;background:#5f97d2;"></div>
    <svg class="abs" style="left:241px;top:8px" width="6" height="6"><path d="M0 5 L4.500 0.500 L6 2 L6 5 Z" fill="#666"/></svg>
  </div>
</div>
</body>
</html>
